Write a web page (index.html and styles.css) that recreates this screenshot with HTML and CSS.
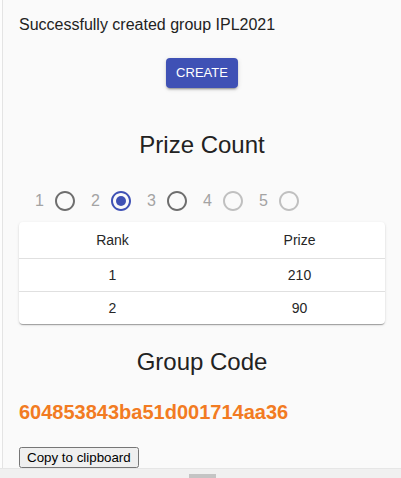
FILE: index.html
```html
<!DOCTYPE html>
<html lang="en">
<head>
<meta charset="utf-8">
<title>Group created</title>
<link rel="stylesheet" href="styles.css">
</head>
<body>
<main class="page">
  <p class="msg">Successfully created group IPL2021</p>
  <div class="center">
    <button class="create">CREATE</button>
  </div>
  <h2 class="heading heading-prize">Prize Count</h2>
  <div class="radios">
    <label class="opt"><span class="num">1</span><svg class="radio off" viewBox="0 0 24 24" width="24" height="24"><path d="M12 2C6.48 2 2 6.48 2 12s4.48 10 10 10 10-4.48 10-10S17.52 2 12 2zm0 18c-4.42 0-8-3.58-8-8s3.58-8 8-8 8 3.580 8 8-3.58 8-8 8z"/></svg></label>
    <label class="opt"><span class="num">2</span><svg class="radio on" viewBox="0 0 24 24" width="24" height="24"><path d="M12 2C6.48 2 2 6.48 2 12s4.48 10 10 10 10-4.48 10-10S17.52 2 12 2zm0 18c-4.42 0-8-3.58-8-8s3.58-8 8-8 8 3.58 8 8-3.58 8-8 8z"/><circle cx="12" cy="12" r="5"/></svg></label>
    <label class="opt"><span class="num">3</span><svg class="radio off" viewBox="0 0 24 24" width="24" height="24"><path d="M12 2C6.48 2 2 6.48 2 12s4.48 10 10 10 10-4.48 10-10S17.52 2 12 2zm0 18c-4.42 0-8-3.58-8-8s3.58-8 8-8 8 3.58 8 8-3.58 8-8 8z"/></svg></label>
    <label class="opt"><span class="num">4</span><svg class="radio dis" viewBox="0 0 24 24" width="24" height="24"><path d="M12 2C6.48 2 2 6.48 2 12s4.48 10 10 10 10-4.48 10-10S17.52 2 12 2zm0 18c-4.42 0-8-3.58-8-8s3.58-8 8-8 8 3.58 8 8-3.58 8-8 8z"/></svg></label>
    <label class="opt"><span class="num">5</span><svg class="radio dis" viewBox="0 0 24 24" width="24" height="24"><path d="M12 2C6.48 2 2 6.48 2 12s4.48 10 10 10 10-4.48 10-10S17.52 2 12 2zm0 18c-4.42 0-8-3.58-8-8s3.58-8 8-8 8 3.58 8 8-3.58 8-8 8z"/></svg></label>
  </div>
  <div class="card">
    <div class="row head"><div class="c1">Rank</div><div class="c2">Prize</div></div>
    <div class="row"><div class="c1">1</div><div class="c2">210</div></div>
    <div class="row last"><div class="c1">2</div><div class="c2">90</div></div>
  </div>
  <h2 class="heading heading-code">Group Code</h2>
  <p class="code">604853843ba51d001714aa36</p>
  <button class="copy">Copy to clipboard</button>
</main>
<div class="bar"><div class="handle"></div></div>
</body>
</html>
```
FILE: styles.css
```css
html, body {
  margin: 0;
  padding: 0;
}
body {
  background: #fdfdfd;
  font-family: "Liberation Sans", Arial, sans-serif;
  color: #222;
  height: 478px;
  overflow: hidden;
}
.page {
  margin-left: 2px;
  border-left: 1px solid #e4e4e4;
  background: #fafafa;
  padding: 16px 16px 0 16px;
  height: 468px;
  box-sizing: border-box;
}
.msg {
  margin: 0;
  font-size: 16px;
  line-height: 18px;
  color: #222;
}
.center {
  display: flex;
  justify-content: center;
  margin-top: 24px;
}
.create {
  font-family: "Liberation Sans", Arial, sans-serif;
  font-size: 13px;
  line-height: 22px;
  padding: 4px 10px;
  border: 0;
  border-radius: 4px;
  background: #3f51b5;
  color: #fff;
  box-shadow: 0 3px 1px -2px rgba(0,0,0,.2), 0 2px 2px 0 rgba(0,0,0,.14), 0 1px 5px 0 rgba(0,0,0,.12);
}
.heading {
  margin: 0;
  font-size: 24px;
  line-height: 28px;
  font-weight: normal;
  text-align: center;
  color: #222;
}
.heading-prize {
  margin-top: 43px;
}
.radios {
  display: flex;
  align-items: center;
  height: 42px;
  margin-top: 21px;
  padding-left: 16px;
}
.opt {
  display: flex;
  align-items: center;
  width: 56px;
}
.num {
  width: 9px;
  margin-right: 9px;
  font-size: 16px;
  color: #a3a3a3;
}
.radio {
  display: block;
}
.radio.off { fill: #6e6e6e; }
.radio.on { fill: #3f51b5; }
.radio.dis { fill: #c0c0c0; }
.card {
  background: #fff;
  border-radius: 4px;
  box-shadow: 0 2px 1px -1px rgba(0,0,0,.2), 0 1px 1px 0 rgba(0,0,0,.14), 0 1px 3px 0 rgba(0,0,0,.12);
}
.row {
  display: grid;
  grid-template-columns: 187px 1fr;
  height: 32px;
  align-items: center;
  font-size: 14px;
  border-bottom: 1px solid #e0e0e0;
  color: #262626;
}
.row.head {
  height: 36px;
}
.row.last {
  border-bottom: 0;
}
.c1 {
  text-align: center;
}
.c2 {
  text-align: center;
  padding-left: 8px;
}
.heading-code {
  margin-top: 24px;
}
.code {
  margin: 25px 0 0 0;
  font-size: 20px;
  line-height: 23px;
  font-weight: bold;
  color: #f27b22;
}
.copy {
  display: block;
  margin-top: 23px;
  font-family: "Liberation Sans", Arial, sans-serif;
  font-size: 13.333px;
}
.bar {
  height: 10px;
  box-sizing: border-box;
  border-top: 1px solid #e6e6e6;
  background: #f0f0f0;
  display: flex;
  justify-content: center;
  align-items: flex-end;
}
.handle {
  width: 27px;
  height: 4px;
  background: #c4c4c4;
  margin-left: 3px;
}
```
